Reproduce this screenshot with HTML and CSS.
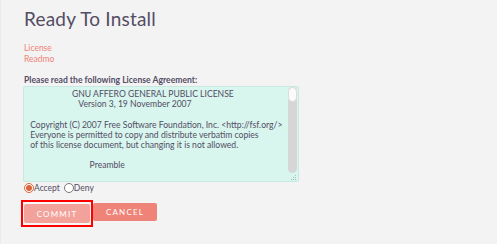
FILE: index.html
```html
<!DOCTYPE html>
<html>
<head>
<title>SuiteCRM Setup Wizard</title>
<link rel="stylesheet" href="styles.css">
</head>
<body>
<div class="panel">
<h1>Ready To Install</h1>
<div class="links">
<a href="#">License</a>
<a href="#">Readmo</a>
</div>
<p class="lbl">Please read the following License Agreement:</p>
<div class="lic">
<div class="lic-text">                    GNU AFFERO GENERAL PUBLIC LICENSE
                       Version 3, 19 November 2007

 Copyright (C) 2007 Free Software Foundation, Inc. &lt;http://fsf.org/&gt;
 Everyone is permitted to copy and distribute verbatim copies
 of this license document, but changing it is not allowed.

                            Preamble</div>
<div class="sbar-col">
<div class="sbar"><div class="thumb"></div></div>
<svg class="grip" width="7" height="7" viewBox="0 0 7 7"><g fill="#a9bdb8"><rect x="5" y="1" width="1" height="1"/><rect x="3" y="3" width="1" height="1"/><rect x="5" y="3" width="1" height="1"/><rect x="1" y="5" width="1" height="1"/><rect x="3" y="5" width="1" height="1"/><rect x="5" y="5" width="1" height="1"/></g></svg>
</div>
</div>
<div class="choice">
<label><input type="radio" name="agree" checked>Accept</label>
<label><input type="radio" name="agree">Deny</label>
</div>
<div class="btns">
<span class="ring"><button class="btn commit">COMMIT</button></span>
<button class="btn">CANCEL</button>
</div>
</div>
</body>
</html>
```
FILE: styles.css
```css
html, body {margin: 0;padding: 0;background: #fff;}
body {font-family: Lato, "Open Sans", sans-serif;color: #534d64;}
.panel {width: 497px;height: 244px;box-sizing: border-box;background: #f3f3f3;border-left: 1px solid #ebebeb;padding: 8px 0 0 23px;}
h1 {margin: 0;font-size: 19px;font-weight: normal;line-height: 22px;letter-spacing: 0.2px;}
.links {margin-top: 13px;display: flex;flex-direction: column;}
.links a {color: #f08377;text-decoration: none;font-size: 8.5px;line-height: 11px;}
.lbl {margin: 10px 0 0 0;font-size: 8.6px;font-weight: bold;line-height: 10px;}
.lic {display: flex;width: 276px;height: 96px;box-sizing: border-box;margin: 1px 0 0 -1px;
  background: #d8f5ee;border: 1px solid #c6eae1;border-radius: 2px;}
.lic-text {flex: 1;overflow: hidden;white-space: pre;padding: 2px 0 0 4px;font-size: 8.6px;line-height: 10.2px;color: #534d64;}
.sbar-col {display: flex;flex-direction: column;width: 9px;padding-right: 1px;}
.sbar {flex: 1;background: #d6d6d6;border-radius: 5px;}
.thumb {height: 15px;box-sizing: border-box;background: #fbfbfb;border-radius: 5px;border: 1px solid #dcdcdc;}
.grip {display: block;margin: 1px 0 0 2px;}
.choice {display: flex;gap: 4px;font-size: 8.5px;line-height: 10px;margin-top: 1px;}
.choice label {display: flex;align-items: center;}
.choice input {width: 10px;height: 10px;margin: 0;accent-color: #d9653b;}
.btns {display: flex;margin-top: 7px;}
.ring {display: flex;margin-left: -3px;padding: 2px 1px;border: 2px solid #f00;background: #f7f7f7;}
.btn {border: none;border-radius: 2px;background: #f08377;color: #fff;font-family: Lato, sans-serif;font-size: 8px;letter-spacing: 1.2px;padding: 0;height: 18px;width: 64px;margin: 3px 0 0 0;}
.commit {width: 66px;height: 19px;margin: 0;background: #f2a29a;}
```
